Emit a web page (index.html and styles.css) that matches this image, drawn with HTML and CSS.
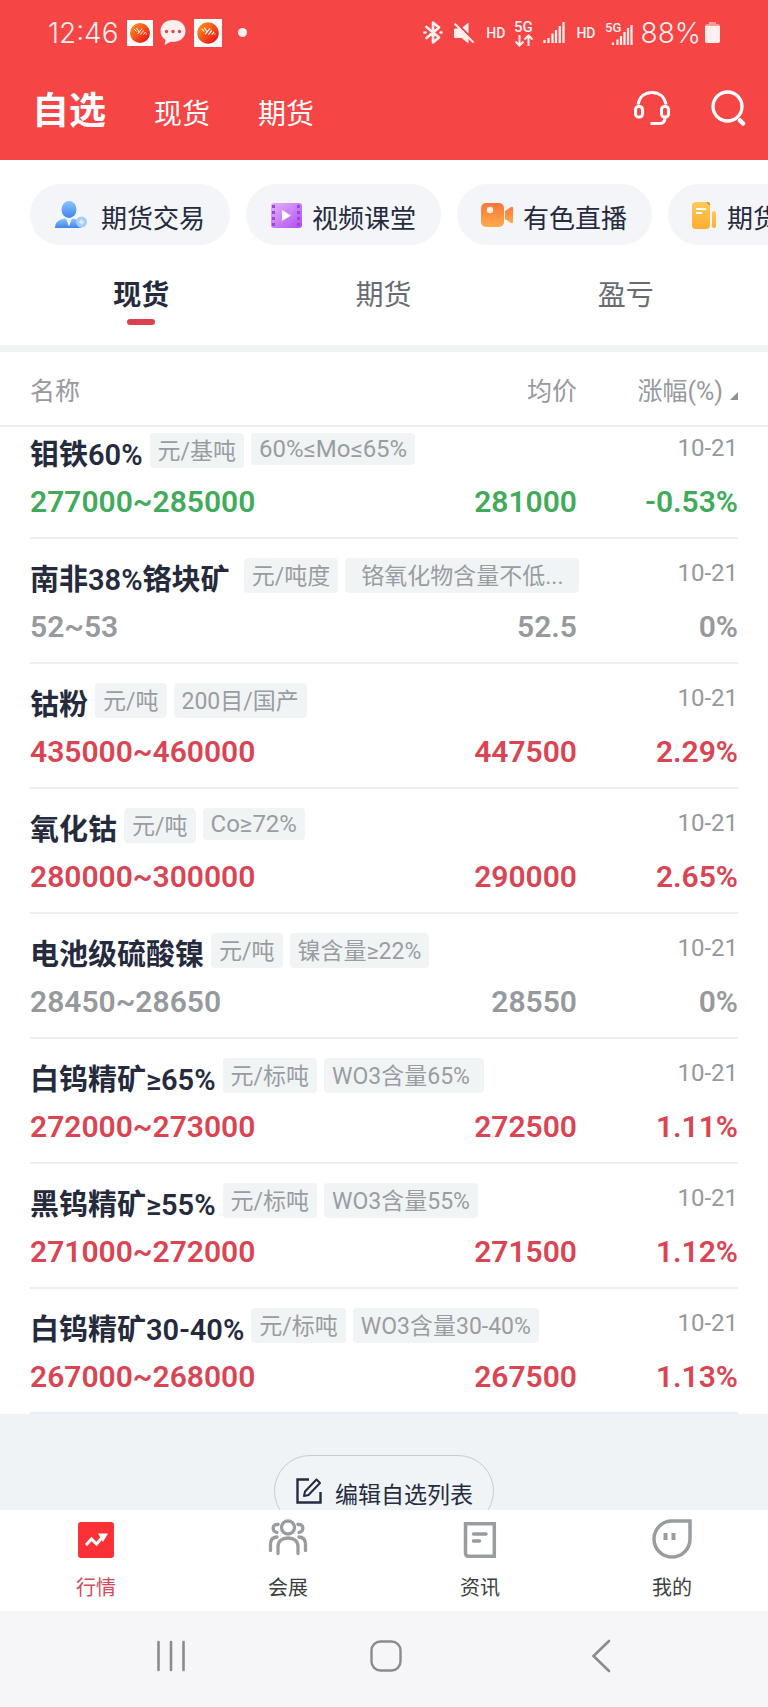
FILE: index.html
```html
<!DOCTYPE html>
<html lang="zh-CN">
<head>
<meta charset="utf-8">
<meta name="viewport" content="width=device-width, initial-scale=1">
<title>自选</title>
<link rel="stylesheet" href="styles.css">
</head>
<body>
<svg class="defs" width="0" height="0" aria-hidden="true">
  <defs>
    <linearGradient id="g-ball" x1="0" y1="0" x2="1" y2="1"><stop offset="0" stop-color="#f9a01b"/><stop offset=".5" stop-color="#f4511e"/><stop offset="1" stop-color="#e60012"/></linearGradient>
    <linearGradient id="g-blue" x1="0" y1="0" x2="0" y2="1"><stop offset="0" stop-color="#8cc4fb"/><stop offset="1" stop-color="#3f83ee"/></linearGradient>
    <linearGradient id="g-purple" x1="0" y1="0" x2="1" y2="1"><stop offset="0" stop-color="#e3b2fb"/><stop offset="1" stop-color="#b04df0"/></linearGradient>
    <linearGradient id="g-orange" x1="0" y1="0" x2="0" y2="1"><stop offset="0" stop-color="#f9763c"/><stop offset="1" stop-color="#fdab4a"/></linearGradient>
    <linearGradient id="g-yellow" x1="0" y1="0" x2="0" y2="1"><stop offset="0" stop-color="#fdc95c"/><stop offset="1" stop-color="#fdae2c"/></linearGradient>
    <symbol id="logo" viewBox="0 0 26 26"><rect width="26" height="26" fill="#fff"/><circle cx="13" cy="13" r="10" fill="url(#g-ball)"/><path d="M7 9l2.500 2.500M9.500 8l3 4.500M10.500 14l4.500-5.500M13.500 14.500l3-4M16.500 14.500l2-2.500M19.500 14.500v-1" fill="none" stroke="#fff" stroke-width="1"/></symbol>
    <symbol id="bars" viewBox="0 0 22 21"><path d="M1.500 18v3M5.500 16v5M9.500 11.500V21M13 8v13M16.800 4v17M20.500 0v21" stroke="#fff0ef" stroke-width="2.300" fill="none"/></symbol>
  </defs>
</svg>

<header class="top">
  <div class="status">
    <span class="clock">12:46</span>
    <svg class="s-logo" width="26" height="26"><use href="#logo"/></svg>
    <svg class="s-chat" width="26" height="25" viewBox="0 0 26 25"><path d="M13 0C5.500 0 .5 4.500.5 11c0 4 2 7 5 9l-1 5 6-3.200c8.500 1 15-3.800 15-10.800C25.500 4.500 20.500 0 13 0z" fill="#fff0ef"/><g fill="#d94a4a"><circle cx="6.500" cy="11.500" r="1.700"/><circle cx="13" cy="11.500" r="1.700"/><circle cx="19.500" cy="11.500" r="1.700"/></g></svg>
    <svg class="s-logo" width="28" height="28"><use href="#logo"/></svg>
    <span class="dot"></span>
    <span class="spring"></span>
    <svg width="20" height="23" viewBox="0 0 20 23"><path d="M3.500 6l12.500 10.500-6 5V1.500l6 5L3.500 17M1.500 11.500h1M17.500 11.500h1" fill="none" stroke="#fff0ef" stroke-width="2.600" stroke-linejoin="round" stroke-linecap="round"/></svg>
    <svg class="s-mute" width="22" height="22" viewBox="0 0 22 22"><path d="M1 7.500q0-1 1-1h4.500L15.500 15v6.500L8.500 16H2q-1 0-1-1zM9.500 5.500L15.500.5v11z" fill="#fff0ef"/><path d="M3 .8l19 19" stroke="#f54545" stroke-width="1.500"/><path d="M1.500 1.500l19 19" stroke="#fff0ef" stroke-width="2"/></svg>
    <span class="hd">HD</span>
    <svg width="20" height="28" viewBox="0 0 20 28"><text class="net" x="0" y="13">5G</text><path d="M5.500 16v10M1.500 22.500l4 4 4-4M14.500 27V17M10.500 20.500l4-4 4 4" fill="none" stroke="#fff0ef" stroke-width="2"/></svg>
    <svg class="s-bars" width="22" height="21"><use href="#bars"/></svg>
    <span class="hd">HD</span>
    <svg width="28" height="28" viewBox="0 0 28 28"><text class="net net-sm" x="0" y="13">5G</text><path d="M8 23.500V26M12.500 20.500V26M16 17v9M19.500 13v13M23 9v17M26.500 6v20" stroke="#fff0ef" stroke-width="2.200" fill="none"/></svg>
    <span class="percent">88%</span>
    <svg width="15" height="23" viewBox="0 0 15 23"><path d="M4 3V1h7v2h2q2 0 2 2v2H0V5q0-2 2-2z" fill="#fb9a97"/><path d="M0 5h15v15q0 2-2 2H2q-2 0-2-2z" fill="#fff0ef"/></svg>
  </div>
  <nav class="title-bar">
    <div class="titles">
      <a class="title" href="#">自选</a>
      <a href="#">现货</a>
      <a href="#">期货</a>
    </div>
    <button class="icon-btn" aria-label="客服"><svg width="36" height="36" viewBox="0 0 36 36" fill="none" stroke="#fff" stroke-width="3"><path d="M4 14.500C5.500 6.500 11 2.500 18 2.500s12.500 4 14 12"/><rect x="1.500" y="16.500" width="7" height="10.500" rx="3"/><rect x="27.500" y="16.500" width="7" height="10.500" rx="3"/><path d="M31 27.500c0 4-2 6-5 6h-8" stroke-linecap="square"/></svg></button>
    <button class="icon-btn" aria-label="搜索"><svg width="36" height="36" viewBox="0 0 36 36" fill="none" stroke="#fff" stroke-width="3.300"><circle cx="17.500" cy="16.500" r="14.500"/><path d="M30 30.500l3 3" stroke-width="4.500" stroke-linecap="round"/></svg></button>
  </nav>
</header>

<nav class="chips">
  <a class="chip" href="#"><svg width="37" height="28" viewBox="0 0 37 28"><ellipse cx="15" cy="8.500" rx="7.500" ry="8.500" fill="url(#g-blue)"/><path d="M1 27c0-6 4-8.500 10-9.500l4 3 4-3c6 1 8 4 8 9.500z" fill="url(#g-blue)"/><path d="M12.500 18.500l2.500 7 2.500-7-2.500 2z" fill="#fff"/><circle cx="27.500" cy="21" r="5.500" fill="#a5cdfa"/><path d="M27.500 18l2.700 3-2.700 3-2.700-3z" fill="#d7eafe"/></svg><span>期货交易</span></a>
  <a class="chip" href="#"><svg width="32" height="28" viewBox="0 0 32 28"><rect x="1" y="2" width="31" height="25" rx="3" fill="url(#g-purple)"/><path d="M3.500 4v22M28.500 4v22" stroke="#9a45de" stroke-width="3" stroke-dasharray="3 3"/><path d="M12 9v11l9-5.500z" fill="#fff"/></svg><span>视频课堂</span></a>
  <a class="chip" href="#"><svg width="32" height="28" viewBox="0 0 32 28"><rect x="0" y="2" width="23" height="24" rx="5" fill="url(#g-orange)"/><path d="M24 10l6-4q2-1 2 1v14q0 2-2 1l-6-4z" fill="url(#g-orange)"/><circle cx="9" cy="9" r="3.200" fill="#fff0e2"/></svg><span>有色直播</span></a>
  <a class="chip" href="#"><svg width="25" height="28" viewBox="0 0 25 28"><rect x="0" y="1" width="18" height="27" rx="4" fill="url(#g-yellow)"/><path d="M14 1l4 4V3q0-2-2-2z" fill="#f28a22"/><path d="M4 8h10M4 12h6" stroke="#fff" stroke-width="2"/><rect x="20" y="10" width="4" height="17" rx="2" fill="url(#g-yellow)"/></svg><span>期货</span></a>
</nav>

<nav class="tabs">
  <a class="tab tab-on" href="#">现货</a>
  <a class="tab" href="#">期货</a>
  <a class="tab" href="#">盈亏</a>
</nav>

<main class="main">
  <table class="quotes">
    <colgroup><col><col class="c-avg"><col class="c-chg"></colgroup>
    <thead>
      <tr><th scope="col">名称</th><th scope="col">均价</th><th scope="col">涨幅(%)<svg class="sort" width="8" height="8" viewBox="0 0 8 8"><path d="M8 0v8H0z" fill="#8d9194"/></svg></th></tr>
    </thead>
    <tbody class="down">
      <tr><td colspan="2"><div class="head"><span class="name">钼铁60%</span><span class="tag">元/基吨</span><span class="tag tag-latin">60%≤Mo≤65%</span></div></td><td class="date">10-21</td></tr>
      <tr class="vals"><td>277000~285000</td><td>281000</td><td>-0.53%</td></tr>
    </tbody>
    <tbody class="flat">
      <tr><td colspan="2"><div class="head"><span class="name">南非38%铬块矿&nbsp;</span><span class="tag">元/吨度</span><span class="tag tag-cut">铬氧化物含量不低...</span></div></td><td class="date">10-21</td></tr>
      <tr class="vals"><td>52~53</td><td>52.5</td><td>0%</td></tr>
    </tbody>
    <tbody class="up">
      <tr><td colspan="2"><div class="head"><span class="name">钴粉</span><span class="tag">元/吨</span><span class="tag">200目/国产</span></div></td><td class="date">10-21</td></tr>
      <tr class="vals"><td>435000~460000</td><td>447500</td><td>2.29%</td></tr>
    </tbody>
    <tbody class="up">
      <tr><td colspan="2"><div class="head"><span class="name">氧化钴</span><span class="tag">元/吨</span><span class="tag tag-latin">Co≥72%</span></div></td><td class="date">10-21</td></tr>
      <tr class="vals"><td>280000~300000</td><td>290000</td><td>2.65%</td></tr>
    </tbody>
    <tbody class="flat">
      <tr><td colspan="2"><div class="head"><span class="name">电池级硫酸镍</span><span class="tag">元/吨</span><span class="tag">镍含量≥22%</span></div></td><td class="date">10-21</td></tr>
      <tr class="vals"><td>28450~28650</td><td>28550</td><td>0%</td></tr>
    </tbody>
    <tbody class="up">
      <tr><td colspan="2"><div class="head"><span class="name">白钨精矿≥65%</span><span class="tag">元/标吨</span><span class="tag">WO3含量65%&nbsp;</span></div></td><td class="date">10-21</td></tr>
      <tr class="vals"><td>272000~273000</td><td>272500</td><td>1.11%</td></tr>
    </tbody>
    <tbody class="up">
      <tr><td colspan="2"><div class="head"><span class="name">黑钨精矿≥55%</span><span class="tag">元/标吨</span><span class="tag">WO3含量55%</span></div></td><td class="date">10-21</td></tr>
      <tr class="vals"><td>271000~272000</td><td>271500</td><td>1.12%</td></tr>
    </tbody>
    <tbody class="up">
      <tr><td colspan="2"><div class="head"><span class="name">白钨精矿30-40%</span><span class="tag">元/标吨</span><span class="tag">WO3含量30-40%</span></div></td><td class="date">10-21</td></tr>
      <tr class="vals"><td>267000~268000</td><td>267500</td><td>1.13%</td></tr>
    </tbody>
  </table>
  <div class="edit-area">
    <button class="edit"><svg width="28" height="28" viewBox="0 0 28 28" fill="none" stroke="#252b42" stroke-width="2.400"><path d="M14 2.500H2.500v23h23V15"/><path d="M10 14.500L21.500 2.500l3.500 3.500-11.500 12-4.500 1z" stroke-width="2" stroke-linejoin="round"/></svg><span>编辑自选列表</span></button>
  </div>
</main>

<nav class="tabbar">
  <a class="item item-on" href="#"><svg width="40" height="40" viewBox="0 0 40 40"><rect x="2" y="3" width="36" height="36" rx="3" fill="#fa3238"/><path d="M10 26l5.500-6 5 5 7-8" fill="none" stroke="#fff" stroke-width="3"/><path d="M22 14.500h10L27 23z" fill="#fff"/></svg>行情</a>
  <a class="item" href="#"><svg width="40" height="40" viewBox="0 0 40 40" fill="none" stroke="#999da0" stroke-width="3.300" stroke-linecap="round"><circle cx="20" cy="8.500" r="6.500"/><path d="M10 5.500c-6-1-6.500 7-1 8M30 5.500c6-1 6.500 7 1 8"/><path d="M10 34.500v-6.500c0-6 4-9 10-9s10 3 10 9v6.500"/><path d="M2.500 31.500v-6.500c0-4.500 2-6.500 6.500-7M37.500 31.500v-6.500c0-4.500-2-6.500-6.500-7"/></svg>会展</a>
  <a class="item" href="#"><svg width="40" height="40" viewBox="0 0 40 40" fill="none" stroke="#999da0" stroke-width="3.500"><path d="M5.500 4.700h28.800v32.600H8.500q-3 0-3-3z"/><path d="M13.500 15H26M13.500 22h6" stroke-linecap="round"/></svg>资讯</a>
  <a class="item" href="#"><svg width="40" height="40" viewBox="0 0 40 40" fill="none" stroke="#999da0" stroke-width="3.500"><path d="M38 2H20A18 18 0 1 0 38 20z"/><path d="M13.500 14v7M21.500 14v7" stroke-width="4"/></svg>我的</a>
</nav>

<nav class="sysnav">
  <button aria-label="最近任务"><svg width="32" height="32" viewBox="0 0 32 32"><path d="M3.500 2v28M16 2v28M28.500 2v28" stroke="#8b8b8d" stroke-width="2.600" stroke-linecap="round"/></svg></button>
  <button aria-label="主屏幕"><svg width="32" height="32" viewBox="0 0 32 32"><rect x="1.500" y="1.500" width="29" height="29" rx="9" fill="none" stroke="#8b8b8d" stroke-width="2.400"/></svg></button>
  <button aria-label="返回"><svg width="32" height="34" viewBox="0 0 32 34"><path d="M24 2L8.500 17 24 32" fill="none" stroke="#8b8b8d" stroke-width="2.600" stroke-linecap="round"/></svg></button>
</nav>
</body>
</html>
```

FILE: styles.css
```css
* { box-sizing: border-box; }

body {
  margin: 0;
  height: 100vh;
  display: flex;
  flex-direction: column;
  overflow: hidden;
  background: #fff;
  color: #252b3d;
  font-family: Roboto, "Noto Sans CJK SC", sans-serif;
}

a { color: inherit; text-decoration: none; }
button { border: 0; padding: 0; background: none; color: inherit; font: inherit; }
svg { display: block; flex: none; }
.defs { position: absolute; }
.spring { flex: 1; }

.top { flex: none; background: #f54545; color: #fff; }

.status {
  display: flex;
  align-items: center;
  height: 65px;
  padding: 0 48px;
  color: #fff0ef;
}
.clock, .percent { font: 300 28px/34px Inter, Roboto, sans-serif; }
.s-logo { margin-left: 8px; }
.s-chat { margin-left: 7px; }
.dot { width: 9px; height: 9px; margin-left: 16px; border-radius: 50%; background: #fff0ef; }
.s-mute { margin-left: 10px; }
.hd { margin: 0 9px 0 11px; font: 500 14px/20px Roboto, sans-serif; }
.s-bars { margin-left: 9px; }
.net { font: 500 15px Roboto, sans-serif; fill: #fff0ef; }
.net-sm { font-size: 13px; }
.percent { margin: 0 4px 0 8px; }

.title-bar {
  display: flex;
  align-items: center;
  gap: 40px;
  height: 95px;
  padding: 0 22px 0 32px;
  font-size: 28px;
  line-height: 40px;
}
.titles { flex: 1; display: flex; align-items: baseline; gap: 48px; padding-top: 2px; }
.title { font-size: 37px; font-weight: 700; }
.icon-btn { padding-bottom: 9px; }

.chips {
  flex: none;
  display: flex;
  gap: 16px;
  padding: 24px 0 0 30px;
  overflow: hidden;
}
.chip {
  flex: none;
  display: flex;
  align-items: center;
  gap: 10px;
  height: 61px;
  padding: 0 25px 0 24px;
  border-radius: 31px;
  background: #f3f5f8;
  font-size: 26px;
}
.chip span, .edit span { padding-top: 3px; }
.chip:last-child { padding-right: 76px; }

.tabs {
  flex: none;
  display: grid;
  grid-template-columns: repeat(3, 1fr);
  padding: 31px 21px 20px 20px;
  border-bottom: 7px solid #eff3f4;
}
.tab {
  display: flex;
  flex-direction: column;
  align-items: center;
  gap: 3px;
  color: #686c72;
  font-size: 28px;
  line-height: 40px;
}
.tab::after { content: ""; width: 28px; height: 6px; border-radius: 3px; }
.tab-on { color: #252b3d; font-weight: 700; }
.tab-on::after { background: #dc4150; }

.main {
  flex: 1;
  min-height: 0;
  overflow: hidden auto;
  scrollbar-width: none;
  background: #eff3f5;
}

.quotes {
  width: 100%;
  table-layout: fixed;
  border-collapse: collapse;
  background: #fff;
}
.c-avg { width: 130px; }
.c-chg { width: 191px; }
.quotes th {
  height: 74px;
  padding: 0;
  border-bottom: 2px solid #eceeef;
  color: #96999e;
  font-size: 25px;
  font-weight: 400;
  text-align: right;
}
.quotes th:first-child { padding-left: 30px; text-align: left; }
.quotes th:last-child, .quotes td:last-child { padding-right: 30px; }
.sort { display: inline-block; margin-left: 7px; }

.quotes td { padding: 0; vertical-align: top; text-align: right; white-space: nowrap; }
.quotes td:first-child { padding-left: 30px; text-align: left; }
.head { display: flex; align-items: flex-start; gap: 7px; height: 61px; padding-top: 19px; }
.quotes tbody:nth-of-type(1) .head { height: 48px; padding-top: 6px; }
.quotes .date { padding-top: 19px; padding-right: 32px; color: #96999e; font-size: 24px; line-height: 30px; }
.quotes tbody:nth-of-type(1) .date { padding-top: 6px; }
.name { font-size: 29px; font-weight: 600; line-height: 44px; }
.tag {
  padding: 3px 8px 0;
  border-radius: 4px;
  background: #f1f4f5;
  color: #999da2;
  font-size: 23px;
  line-height: 32px;
}
.tag-latin { padding-top: 0; font-size: 24px; }
.tag-cut { padding: 3px 16px 0; }
.quotes .vals td {
  height: 64px;
  padding-top: 9px;
  font-size: 30px;
  font-weight: 600;
  line-height: 36px;
}
.vals {
  background: linear-gradient(#eceeef, #eceeef) center bottom / calc(100% - 60px) 2px no-repeat;
}
.down .vals { color: #41ab5b; }
.flat .vals { color: #96999d; }
.up .vals { color: #da4453; }

.edit-area { display: flex; justify-content: center; padding: 41px 0 24px; }
.edit {
  display: flex;
  align-items: center;
  gap: 12px;
  height: 72px;
  padding: 0 20px;
  border: 1px solid #c9cccf;
  border-radius: 36px;
  background: #f1f4f6;
  color: #252b42;
  font-size: 23px;
}

.tabbar {
  flex: none;
  display: grid;
  grid-template-columns: repeat(4, 1fr);
  padding: 9px 0 8px;
  background: #fff;
}
.item {
  display: flex;
  flex-direction: column;
  align-items: center;
  gap: 14px;
  color: #3c3d40;
  font-size: 20px;
  line-height: 30px;
}
.item-on { color: #d5485c; }

.sysnav {
  flex: none;
  display: grid;
  grid-template-columns: repeat(3, 1fr);
  justify-items: center;
  height: 96px;
  padding: 0 60px 6px 64px;
  background: #f6f6f8;
}
```
